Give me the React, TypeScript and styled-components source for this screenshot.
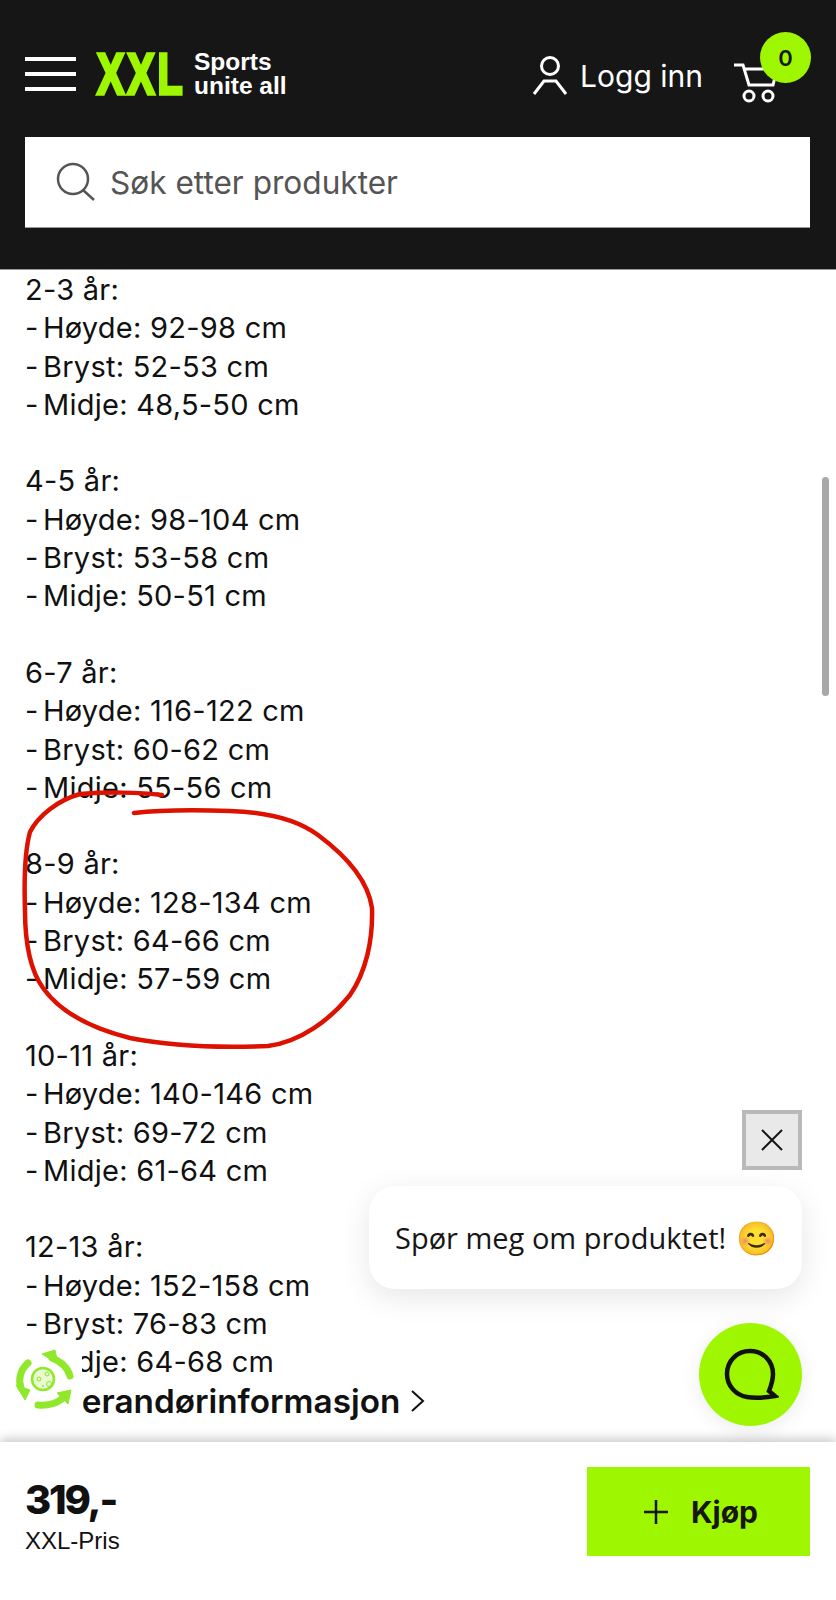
import React from "react";
import styled, { createGlobalStyle } from "styled-components";

const GlobalStyle = createGlobalStyle`
  html, body {
    margin: 0;
    padding: 0;
    background: #fff;
  }
`;

const Page = styled.div`
  position: relative;
  display: flex;
  flex-direction: column;
  width: 836px;
  height: 1600px;
  overflow: hidden;
  font-family: Inter, "Liberation Sans", sans-serif;
  color: #111;
  background: #fff;
`;

const Header = styled.header`
  flex: none;
  height: 270px;
  box-sizing: border-box;
  padding: 39px 25px 0;
  background: #161616;
  border-bottom: 1px solid #999;
`;

const TopRow = styled.div`
  display: flex;
  align-items: center;
  height: 70px;
  margin-bottom: 28px;
`;

const Burger = styled.div`
  display: flex;
  flex-direction: column;
  gap: 11px;
  width: 51px;
  margin-right: 21px;

  span {
    height: 4px;
    background: #fff;
  }
`;

const Logo = styled.div`
  font-family: "Liberation Sans", sans-serif;
  font-weight: 700;
  font-size: 57px;
  line-height: 44px;
  height: 44px;
  color: #9ef600;
  transform: scaleX(0.72);
  transform-origin: left center;
  width: 97px;
  -webkit-text-stroke: 3.5px #9ef600;
  letter-spacing: 4px;
  white-space: nowrap;
`;

const Tagline = styled.div`
  font-family: "Liberation Sans", sans-serif;
  font-weight: 700;
  font-size: 24.5px;
  line-height: 24px;
  color: #fff;
`;

const Spacer = styled.div`
  flex: 1;
`;

const Login = styled.div`
  display: flex;
  align-items: center;
  gap: 13px;
  padding-top: 3px;
  font-size: 30px;
  color: #fff;
  margin-right: 30px;
`;

const Cart = styled.div`
  position: relative;
  flex: none;
  width: 78px;
  height: 60px;
`;

const Badge = styled.div`
  position: absolute;
  top: -12px;
  right: 0;
  width: 51px;
  height: 51px;
  border-radius: 50%;
  background: #9ef600;
  color: #161616;
  font-size: 22px;
  font-weight: 600;
  display: flex;
  align-items: center;
  justify-content: center;
`;

const SearchBox = styled.div`
  display: flex;
  align-items: center;
  gap: 14px;
  height: 91px;
  box-sizing: border-box;
  margin-right: 1px;
  padding-left: 31px;
  background: #fff;
  border-bottom: 1px solid #999;
  color: #555;
  font-size: 31.6px;
`;

const Content = styled.main`
  flex: 1;
  min-height: 0;
  overflow: hidden;
  padding: 1px 25px 0;
`;

const Block = styled.div`
  margin-bottom: 38.3px;
`;

const Line = styled.div`
  font-size: 29px;
  line-height: 38.3px;
  letter-spacing: 0.25px;
  white-space: nowrap;
  color: #111;
`;

const Dash = styled.span`
  display: inline-block;
  width: 18px;
`;

const InfoLink = styled.div`
  display: flex;
  align-items: center;
  gap: 11px;
  margin-top: -1px;
  font-size: 33.3px;
  font-weight: 600;
  line-height: 40px;
  white-space: nowrap;
`;

const Footer = styled.footer`
  position: relative;
  flex: none;
  height: 158px;
  box-sizing: border-box;
  display: flex;
  align-items: flex-start;
  justify-content: space-between;
  padding: 26px 26px 0 25px;
  background: #fff;
  box-shadow: 0 -3px 10px rgba(0, 0, 0, 0.22);
`;

const Price = styled.div`
  font-size: 40px;
  font-weight: 800;
  line-height: 50px;
  letter-spacing: -2.2px;
  margin-top: 7px;
  color: #111;
`;

const PriceLabel = styled.div`
  font-family: "Liberation Sans", sans-serif;
  font-size: 24px;
  line-height: 32px;
`;

const BuyButton = styled.div`
  display: flex;
  align-items: center;
  justify-content: center;
  gap: 22px;
  width: 223px;
  height: 89px;
  box-sizing: border-box;
  padding-left: 4px;
  margin-top: -1px;
  background: #9ef600;
  color: #161616;
  font-size: 30px;
  font-weight: 700;
`;

const Scrollbar = styled.div`
  position: absolute;
  left: 822px;
  top: 477px;
  width: 7px;
  height: 219px;
  border-radius: 4px;
  background: #a8a8a8;
`;

const Annotation = styled.svg`
  position: absolute;
  left: 0;
  top: 780px;
  pointer-events: none;
`;

const RecycleBadge = styled.div`
  position: absolute;
  left: 0;
  top: 1345px;
  width: 82px;
  height: 75px;
  background: #fff;
`;

const CloseButton = styled.div`
  position: absolute;
  left: 742px;
  top: 1110px;
  width: 60px;
  height: 60px;
  box-sizing: border-box;
  border: 4px solid #b9b9b9;
  background: #e9e9e9;
  display: flex;
  align-items: center;
  justify-content: center;
`;

const Bubble = styled.div`
  position: absolute;
  left: 369px;
  top: 1186px;
  width: 433px;
  height: 103px;
  box-sizing: border-box;
  padding-left: 26px;
  border-radius: 26px;
  background: #fff;
  box-shadow: 0 8px 30px rgba(0, 0, 0, 0.1);
  display: flex;
  align-items: center;
  gap: 10px;
  font-family: "Open Sans", sans-serif;
  font-size: 29px;
  color: #161616;
  white-space: nowrap;
`;

const Emoji = styled.span`
  font-size: 33px;
  line-height: 1;
`;

const ChatButton = styled.div`
  position: absolute;
  left: 699px;
  top: 1323px;
  width: 103px;
  height: 103px;
  border-radius: 50%;
  background: #9ef600;
  box-shadow: 0 4px 20px rgba(0, 0, 0, 0.08);
  display: flex;
  align-items: center;
  justify-content: center;
`;

const sizes = [
  { age: "2-3 år:", h: "92-98", b: "52-53", m: "48,5-50" },
  { age: "4-5 år:", h: "98-104", b: "53-58", m: "50-51" },
  { age: "6-7 år:", h: "116-122", b: "60-62", m: "55-56" },
  { age: "8-9 år:", h: "128-134", b: "64-66", m: "57-59" },
  { age: "10-11 år:", h: "140-146", b: "69-72", m: "61-64" },
];

const App = () => {
  return (
    <Page>
      <GlobalStyle />
      <Header>
        <TopRow>
          <Burger>
            <span />
            <span />
            <span />
          </Burger>
          <Logo>XXL</Logo>
          <Tagline>
            Sports
            <br />
            unite all
          </Tagline>
          <Spacer />
          <Login>
            <svg width="34" height="40" viewBox="0 0 34 40" fill="none" stroke="#fff" strokeWidth="3">
              <circle cx="17" cy="10" r="8.5" />
              <path d="M1 38 L11 25 H23 L33 38" />
            </svg>
            Logg inn
          </Login>
          <Cart>
            <svg width="46" height="42" viewBox="0 0 46 42" fill="none" stroke="#fff" strokeWidth="3" style={{ marginTop: 18 }}>
              <path d="M1 3 H10 L16 23 H40 L44 7 H12" />
              <circle cx="16" cy="34" r="5" />
              <circle cx="35" cy="34" r="5" />
            </svg>
            <Badge>0</Badge>
          </Cart>
        </TopRow>
        <SearchBox>
          <svg width="40" height="40" viewBox="0 0 40 40" fill="none" stroke="#555" strokeWidth="2.5">
            <circle cx="17" cy="17" r="15" />
            <path d="M27 28 L38 38" />
          </svg>
          Søk etter produkter
        </SearchBox>
      </Header>
      <Content>
        {sizes.map((s) => (
          <Block key={s.age}>
            <Line>{s.age}</Line>
            <Line><Dash>-</Dash>Høyde: {s.h} cm</Line>
            <Line><Dash>-</Dash>Bryst: {s.b} cm</Line>
            <Line><Dash>-</Dash>Midje: {s.m} cm</Line>
          </Block>
        ))}
        <Line>12-13 år:</Line>
        <Line><Dash>-</Dash>Høyde: 152-158 cm</Line>
        <Line><Dash>-</Dash>Bryst: 76-83 cm</Line>
        <Line><Dash>-</Dash>Midje: 64-68 cm</Line>
        <InfoLink>
          Leverandørinformasjon
          <svg width="14" height="24" viewBox="0 0 14 24" fill="none" stroke="#111" strokeWidth="2">
            <path d="M1 2 L12 12 L1 22" />
          </svg>
        </InfoLink>
      </Content>
      <Footer>
        <div>
          <Price>319,-</Price>
          <PriceLabel>XXL-Pris</PriceLabel>
        </div>
        <BuyButton>
          <svg width="26" height="26" viewBox="0 0 26 26" stroke="#161616" strokeWidth="2.5">
            <path d="M13 1 V25 M1 13 H25" />
          </svg>
          Kjøp
        </BuyButton>
      </Footer>
      <Scrollbar />
      <Annotation width="400" height="280" viewBox="0 0 400 280" fill="none" stroke="#dd1100" strokeWidth="4.5" strokeLinecap="round">
        <path d="M162 15 C140 12 105 12 80 14 C58 20 38 36 30 52 C25 70 24 100 25 130 C25 160 30 190 43 208 C60 232 90 248 130 258 C170 266 220 268 268 266 C300 262 330 240 350 215 C366 192 373 160 372 128 C368 100 345 75 318 55 C295 38 265 32 230 31 C200 30 160 30 134 33" />
      </Annotation>
      <RecycleBadge>
        <svg width="82" height="75" viewBox="0 5 82 75" fill="none">
          <g stroke="#8fe82a" strokeWidth="7" strokeLinecap="round">
            <path d="M28 23 C20 30 18 40 21 48" />
            <path d="M52 18 C62 22 68 29 70 36" />
            <path d="M38 65 C48 66 58 63 64 57" />
          </g>
          <path d="M16 45 L30 50 L25 60 Z M42 14 L55 10 L58 24 Z M71 50 L57 53 L68 64 Z" fill="#8fe82a" stroke="#8fe82a" strokeWidth="1" />
          <circle cx="43" cy="39" r="11" stroke="#8fe82a" strokeWidth="2.5" fill="#eaf9d0" />
          <g stroke="#8fe82a" strokeWidth="1">
            <circle cx="39" cy="39" r="2" />
            <circle cx="47" cy="34" r="2" />
            <circle cx="49" cy="44" r="2.5" />
            <circle cx="43" cy="46" r="0.6" />
          </g>
        </svg>
      </RecycleBadge>
      <CloseButton>
        <svg width="24" height="24" viewBox="0 0 24 24" stroke="#161616" strokeWidth="2">
          <path d="M2 2 L22 22 M22 2 L2 22" />
        </svg>
      </CloseButton>
      <Bubble>
        <span>Spør meg om produktet!</span>
        <Emoji>😊</Emoji>
      </Bubble>
      <ChatButton>
        <svg width="56" height="56" viewBox="0 0 56 56" fill="none" stroke="#111" strokeWidth="4.5">
          <path d="M46 44 L52 49 C40 51 30 51 24 50 C12 48 4 38 4 27 C4 14 14 4 27 4 C40 4 50 14 50 27 C50 33 48 39 46 44 Z" />
        </svg>
      </ChatButton>
    </Page>
  );
};

export default App;
